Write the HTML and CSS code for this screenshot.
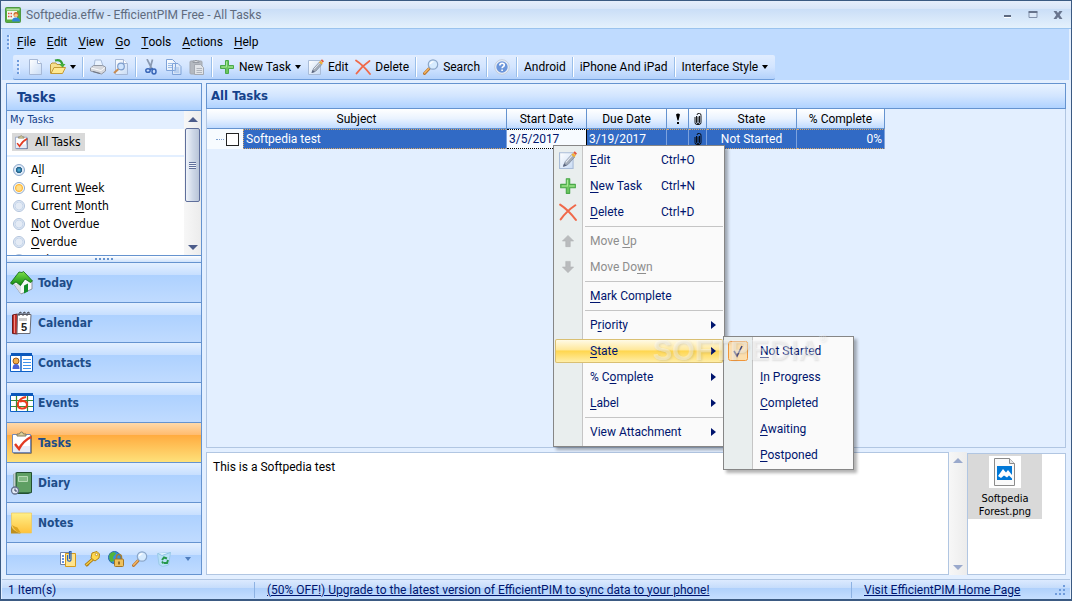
FILE: index.html
```html
<!DOCTYPE html>
<html lang="en">
<head>
  <meta charset="UTF-8">
  <meta name="viewport" content="width=device-width, initial-scale=1.0">
  <title>Softpedia.effw - EfficientPIM Free - All Tasks</title>
  <link rel="stylesheet" href="styles.css">
</head>
<body>
  <!-- Icons used more than once -->
  <svg class="defs" width="0" height="0" aria-hidden="true">
    <defs>
      <linearGradient id="page-fill" x1="0" y1="0" x2="1" y2="1">
        <stop offset="0" stop-color="#ffffff"/>
        <stop offset="1" stop-color="#c9dcf5"/>
      </linearGradient>
      <linearGradient id="roof-fill" x1="0" y1="0" x2="0" y2="1">
        <stop offset="0" stop-color="#7be04a"/>
        <stop offset="1" stop-color="#108a10"/>
      </linearGradient>
      <linearGradient id="note-fill" x1="0" y1="0" x2="0" y2="1">
        <stop offset="0" stop-color="#fff08a"/>
        <stop offset="1" stop-color="#ffc23c"/>
      </linearGradient>
    </defs>
    <symbol id="icon-edit" viewBox="0 0 16 16">
      <path d="M.5 1.500h12v14H.5z" fill="url(#page-fill)" stroke="#a9bcd8"/>
      <path d="M4 13.500l1.500-4L11.500 3l2.500 2.300L8 12z" fill="#a3acb9" stroke="#7d889b" stroke-width=".7"/>
      <path d="M6 10.200L12 3.600" stroke="#e3e8ef" stroke-width="1"/>
      <path d="M11 3.300l1.500-1.600 2.500 2.300-1.500 1.600z" fill="#f2b234"/>
      <path d="M12.700 1.600L14 .3l2 1.900-1.200 1.300z" fill="#e2583e"/>
      <path d="M3.500 14l1-3L7 13z" fill="#5b6680"/>
    </symbol>
    <symbol id="icon-plus" viewBox="0 0 16 16">
      <path d="M6.500 1.500h3v5h5v3h-5v5h-3v-5h-5v-3h5z" fill="#6cc65f" stroke="#4aa84a" stroke-linejoin="round"/>
      <path d="M7.500 2.500v5.500h-5M9 8h5" fill="none" stroke="#a7e996" stroke-width="1"/>
    </symbol>
    <symbol id="icon-delete" viewBox="0 0 16 16">
      <path d="M1 1.500Q8 6 15 15M14.500 2Q7 7 1.500 14.500" fill="none" stroke="#f0694a" stroke-width="1.800" stroke-linecap="round"/>
    </symbol>
    <symbol id="icon-search" viewBox="0 0 16 16">
      <path d="M1.500 14.500L6 9.800" stroke="#b9752f" stroke-width="3" stroke-linecap="round"/>
      <path d="M1.600 14L5.800 9.600" stroke="#f7b964" stroke-width="1.300" stroke-linecap="round"/>
      <circle cx="10" cy="5.500" r="4.700" fill="#d6ebff" stroke="#8ba6c9" stroke-width="1.200"/>
      <path d="M7.300 5Q8 2.700 10.500 2.600" fill="none" stroke="#fff" stroke-width="1.400"/>
    </symbol>
    <symbol id="icon-tasks" viewBox="0 0 24 24">
      <path d="M3.500 4.500h18v18h-18z" fill="#1e2c52"/>
      <path d="M2.500 3.500h18v18h-18z" fill="#fff" stroke="#7289b8"/>
      <path d="M3 15h17v6H3z" fill="#e6ecf7"/>
      <path d="M7 5V3h2.500q.5-2 2-2t2 2H16v2z" fill="#dcd19c" stroke="#85795a"/>
      <path d="M5 13l4 5q4-8 12-12" fill="none" stroke="#e23b22" stroke-width="2.500"/>
    </symbol>
    <symbol id="icon-clip" viewBox="0 0 8 12">
      <path d="M4 3.500v5.500M2.500 3v6a1.500 1.500 0 0 0 3 0V3M1 4v5.500a2 2 0 0 0 2 2h2a2 2 0 0 0 2-2V2.500a2 2 0 0 0-4-.5" fill="none" stroke="currentColor" stroke-width=".9"/>
    </symbol>
  </svg>

  <div class="window">
    <header class="titlebar">
      <svg class="icon" viewBox="0 0 16 16">
        <rect x=".5" y=".5" width="15" height="15" rx="1" fill="#58ad3d" stroke="#4e9a43"/>
        <path d="M2 4h10v8.500H2z" fill="#f4f7ef"/>
        <path d="M1.500 1.500h13v2h-13z" fill="#b9dfa5"/>
        <path d="M3 6.500h1.500M5.500 6.500H7M3 9.500h1.500M5.500 9.500H7" stroke="#dd5142" stroke-width="1.500"/>
        <circle cx="11" cy="7.500" r="2.500" fill="#c9692a"/>
        <circle cx="11" cy="8.300" r="1.700" fill="#ffc78c"/>
        <path d="M7 14.500q0-4 4-4t4 4z" fill="#3184d8"/>
      </svg>
      <h1>Softpedia.effw - EfficientPIM Free - All Tasks</h1>
      <div class="window-buttons">
        <button type="button" aria-label="Minimize"><svg viewBox="0 0 10 10"><path d="M1 6h7" stroke="#5c6980" stroke-width="2"/><path d="M1 7.500h7" stroke="#fff"/></svg></button>
        <button type="button" aria-label="Maximize"><svg viewBox="0 0 10 10"><path d="M1 2.500h8v5H1z" fill="#dbe8f8" stroke="#8291ab"/><path d="M.5 2h9" stroke="#66738c" stroke-width="2"/></svg></button>
        <button type="button" aria-label="Close"><svg viewBox="0 0 10 10"><path d="M.5 1h3L5 3l1.500-2h3L6.700 5l2.800 4h-3L5 7 3.500 9h-3l2.800-4z" fill="#68758e"/></svg></button>
      </div>
    </header>

    <nav class="menubar">
      <span class="grip"></span>
      <button type="button"><u>F</u>ile</button>
      <button type="button"><u>E</u>dit</button>
      <button type="button"><u>V</u>iew</button>
      <button type="button"><u>G</u>o</button>
      <button type="button"><u>T</u>ools</button>
      <button type="button"><u>A</u>ctions</button>
      <button type="button"><u>H</u>elp</button>
    </nav>

    <div class="toolbar-row">
      <div class="toolbar">
        <span class="grip"></span>
        <button type="button" aria-label="New"><svg class="icon" viewBox="0 0 16 16"><path d="M2.500.500h8l4 4v11h-12z" fill="url(#page-fill)" stroke="#a6b8d6"/><path d="M10.500.500v4h4" fill="#fff" stroke="#a6b8d6"/></svg></button>
        <button type="button" aria-label="Open"><svg class="icon" viewBox="0 0 16 16"><path d="M.5 14.500V5.500L2 4h4l1 1.500h6v3" fill="#f6df8e" stroke="#bd9638"/><path d="M1 14.500L4 8.500h11.500l-3 6z" fill="#ffe991" stroke="#c49a36"/><path d="M5 1.500q6-1.500 7.500 4" fill="none" stroke="#37a03a" stroke-width="2.200"/><path d="M9 5h6.500l-3 3.500z" fill="#45b03f"/></svg><span class="caret"></span></button>
        <span class="separator"></span>
        <button type="button" aria-label="Print"><svg class="icon" viewBox="0 0 16 16"><path d="M4 8L5 1h6l2 6z" fill="#e9f3ff" stroke="#a9bcd9"/><path d="M.5 9l3-2.500h9L15.500 8v4l-4 3L.5 12z" fill="#d6d8dd" stroke="#9298a4"/><path d="M1 9l10 2.500 4-3" fill="none" stroke="#fafbfc"/><path d="M3 12.500l7 2" stroke="#6f7684" stroke-width="1.300"/></svg></button>
        <button type="button" aria-label="Print Preview"><svg class="icon" viewBox="0 0 16 16"><path d="M2.500.500h8l4 4v11h-12z" fill="url(#page-fill)" stroke="#a6b8d6"/><path d="M10.500.500v4h4" fill="#fff" stroke="#a6b8d6"/><path d="M1 14l4.500-4" stroke="#c98b4f" stroke-width="2"/><circle cx="8" cy="7.500" r="3.300" fill="#cfe5ff" stroke="#7d9ccb" stroke-width="1.200"/></svg></button>
        <span class="separator"></span>
        <button type="button" aria-label="Cut"><svg class="icon" viewBox="0 0 16 16"><path d="M4 0l5 10M9.500.500L7 10" stroke="#8b9ab2" stroke-width="1.700"/><ellipse cx="5" cy="11.500" rx="2.200" ry="1.800" fill="none" stroke="#3a67b8" stroke-width="1.500"/><ellipse cx="11" cy="12.500" rx="2" ry="2.500" fill="none" stroke="#3a67b8" stroke-width="1.500"/><path d="M7 10.500l3-1" stroke="#3a67b8" stroke-width="1.500"/></svg></button>
        <button type="button" aria-label="Copy"><svg class="icon" viewBox="0 0 16 16"><path d="M.5.500h6l3 3v8h-9zM6.500 4.500h5.500l3 3v8H6.500z" fill="url(#page-fill)" stroke="#7fa3d8"/><path d="M2 4.500h4M2 6.500h4M2 8.500h4M8 9h5M8 11h5M8 13h5" stroke="#9dbde8"/></svg></button>
        <button type="button" aria-label="Paste"><svg class="icon" viewBox="0 0 16 16"><rect x="1" y="2" width="12" height="13" rx="1" fill="#b4b9c0" stroke="#a3a8b0"/><path d="M4 3.500V2h2q1-2 2 0h2v1.500z" fill="#d9dbde" stroke="#969ba3"/><path d="M5.500 5.500h6l3 3v7h-9z" fill="#e1e4e8" stroke="#a4a9b1"/><path d="M7.500 9.500H13M7.500 11.500H13M7.500 13.500H13" stroke="#afb4bc"/></svg></button>
        <span class="separator"></span>
        <button type="button"><svg class="icon"><use href="#icon-plus"/></svg>New Task<span class="caret"></span></button>
        <button type="button"><svg class="icon"><use href="#icon-edit"/></svg>Edit</button>
        <button type="button"><svg class="icon"><use href="#icon-delete"/></svg>Delete</button>
        <span class="separator"></span>
        <button type="button"><svg class="icon"><use href="#icon-search"/></svg>Search</button>
        <span class="separator"></span>
        <button type="button" aria-label="Help"><svg class="icon" viewBox="0 0 16 16"><circle cx="8" cy="8" r="7.300" fill="#e9eff8" stroke="#c3cddc"/><circle cx="8" cy="8" r="5.700" fill="#6b95da"/><path d="M5.800 6.500q0-2.300 2.300-2.300 2.200 0 2.200 1.900 0 1.200-1.200 1.700-1 .5-1 1.500M8.100 10.400v1.700" fill="none" stroke="#fff" stroke-width="1.600"/></svg></button>
        <span class="separator"></span>
        <button type="button">Android</button>
        <span class="separator"></span>
        <button type="button">iPhone And iPad</button>
        <span class="separator"></span>
        <button type="button">Interface Style<span class="caret"></span></button>
      </div>
    </div>

    <div class="workspace">
      <aside class="sidebar">
        <h2 class="panel-title">Tasks</h2>
        <div class="filters">
          <div class="filter-list">
            <h3>My Tasks</h3>
            <div class="all-tasks">
              <button type="button"><svg class="icon-small"><use href="#icon-tasks"/></svg>All Tasks</button>
            </div>
            <div class="radio-list">
              <label><input type="radio" name="filter" checked><span>A<u>l</u>l</span></label>
              <label><input type="radio" name="filter" class="hot"><span>Current <u>W</u>eek</span></label>
              <label><input type="radio" name="filter"><span>Current <u>M</u>onth</span></label>
              <label><input type="radio" name="filter"><span><u>N</u>ot Overdue</span></label>
              <label><input type="radio" name="filter"><span><u>O</u>verdue</span></label>
              <label><input type="radio" name="filter"><span>Today</span></label>
            </div>
          </div>
          <div class="scrollbar">
            <span class="arrow-up"></span>
            <span class="thumb"></span>
            <span class="arrow-down"></span>
          </div>
        </div>
        <div class="splitter"><span></span><span></span><span></span><span></span><span></span></div>

        <nav class="modules">
          <button type="button"><svg viewBox="0 0 24 24"><path d="M3 12l8 11 11-5v-8L13 5z" fill="#f7f8fa" stroke="#8c929c"/><path d="M3 12l8 11V14z" fill="#dcdfe5"/><path d="M14 14.500l4-2v8l-4 2z" fill="#148c2a"/><path d="M.5 12L9 1l3 .5 1.500-1L15 2l7.500 8-2 1.500L15 8l-4.500 6.500L6 11l-4 2.500z" fill="url(#roof-fill)" stroke="#0b6413" stroke-width=".8"/></svg>Today</button>
          <button type="button"><svg viewBox="0 0 24 24"><path d="M2.500 4l5-1v20l-5-.5z" fill="#c02d27" stroke="#6d1b1b"/><path d="M4.500 4v18" stroke="#ee8a80"/><path d="M7.500 3.500H21l-1 19H7z" fill="#fff" stroke="#6c6c75"/><path d="M9 5V2l2-1v3M13 5V2l2-1v3M17 5V2l2-1v3" fill="none" stroke="#41434d"/><path d="M10 7v3M12 7v3M14 7v3M16 7v3" stroke="#999"/><text x="11" y="20" class="day">5</text></svg>Calendar</button>
          <button type="button"><svg viewBox="0 0 24 24"><path d="M.5 4.500h22v16H.5z" fill="#fff" stroke="#0d60c8"/><path d="M1 3.500h21" stroke="#0c58bb" stroke-width="3"/><path d="M11 4v16" stroke="#0d60c8" stroke-width="1.500"/><path d="M13 8.500h8M13 11.500h8M13 14.500h8M13 17.500h8" stroke="#4295ed"/><circle cx="6" cy="10" r="3" fill="#f3ae4c" stroke="#9c5a18"/><path d="M2.500 18q0-5 3.500-5t3.500 5z" fill="#4a62d6"/></svg>Contacts</button>
          <button type="button"><svg viewBox="0 0 24 24"><path d="M.5 4.500h23v16H.5z" fill="#fff" stroke="#0d60c8"/><path d="M1 3.500h22" stroke="#0c58bb" stroke-width="3"/><path d="M1 9.500h22M1 15.500h22M6.500 5v15M17.500 5v15" stroke="#3d8b33" stroke-width="1.200"/><path d="M16 6Q10 7 8 12q-1 5 3.500 5.500Q17 18 17 13q-1-4-7-2.500" fill="none" stroke="#ee3a1c" stroke-width="2"/></svg>Events</button>
          <button type="button" class="active"><svg><use href="#icon-tasks"/></svg>Tasks</button>
          <button type="button"><svg viewBox="0 0 24 24"><path d="M4 3l3-1.500h14.500v20L18 22.500H4z" fill="#356f43" stroke="#234f31"/><path d="M7 2h14v19H7z" fill="#5f9f63"/><path d="M4.500 2v20" stroke="#c4ccd0" stroke-width="2"/><path d="M8.500 5.500h9v5h-9z" fill="#83b985" stroke="#b6dab4"/><circle cx="5" cy="19.500" r="3.500" fill="#e5ebf7" stroke="#65728e" stroke-width="1.300"/><path d="M5 17.500v2.500h2" fill="none" stroke="#34415e"/></svg>Diary</button>
          <button type="button"><svg viewBox="0 0 24 24"><path d="M1.500 2h20v20H10Q2 21 1.500 13z" fill="url(#note-fill)" stroke="#eec759" stroke-width=".7"/><path d="M1 14q1 6 10 8.500H1z" fill="#bd8f1e"/><path d="M2 14q5 3 5 2l4 6Q5 21 2 14z" fill="#dda51f"/></svg>Notes</button>
        </nav>
        <div class="shortcuts">
          <button type="button" aria-label="Clipboard"><svg class="icon" viewBox="0 0 16 16"><path d="M.5 1.500h9v12h-9z" fill="#fff" stroke="#6e82a8"/><path d="M2 5h2M2 8h2M2 11h2" stroke="#3770d3" stroke-width="1.500"/><path d="M5.500 2.500h10v13h-10z" fill="#ffe48c" stroke="#d49a1c"/><path d="M7.500 4v4.500a1.500 1.500 0 0 0 3.500 0V.5H9.500V8" fill="none" stroke="#2b63b9" stroke-width="1.200"/></svg></button>
          <button type="button" aria-label="Passwords"><svg class="icon" viewBox="0 0 16 16"><path d="M9 8L1.500 14.500M3 13l1.500 1.500" stroke="#aa7b12" stroke-width="3"/><path d="M9 8L2 14" stroke="#f5cb45" stroke-width="1.500"/><path d="M8 2l5-1.500L15.500 3 15 7l-4 3-4-3z" fill="#ffd84f" stroke="#b18518"/><circle cx="12.500" cy="3.500" r="1.200" fill="#fff" stroke="#a6790f" stroke-width=".7"/></svg></button>
          <button type="button" aria-label="Lock"><svg class="icon" viewBox="0 0 16 16"><circle cx="6.500" cy="6.500" r="6" fill="#368fdc" stroke="#2368a6"/><path d="M2 2.500q4-3 6 0L5 6l1 4-3 1Q0 7 2 2.500z" fill="#51b43a"/><path d="M8.500 9V6.500q0-3 2.500-3t2.500 3V9" fill="none" stroke="#a17e37" stroke-width="1.500"/><rect x="6.500" y="8" width="9" height="7.500" rx="1" fill="#efc15c" stroke="#a47625"/><path d="M11 10.500v3" stroke="#795515" stroke-width="1.500"/></svg></button>
          <button type="button" aria-label="Find"><svg class="icon"><use href="#icon-search"/></svg></button>
          <button type="button" aria-label="Recycle Bin"><svg class="icon" viewBox="0 0 16 16"><path d="M1.500 2.500l13-1-2 12.500-6 1.500-3.500-2z" fill="#b8e0f8" stroke="#9ccbe9"/><path d="M2 2.500l4 2 8.500-3" fill="#e3f4ff" stroke="#8fc3e5"/><path d="M6 9l2-2.500 3 1M12 9l-1 3H8M6 10.500l1.500 2" fill="none" stroke="#25974a" stroke-width="2"/></svg></button>
          <button type="button" aria-label="Configure"><span class="caret"></span></button>
        </div>
      </aside>

      <main class="content">
        <section class="task-pane">
          <h2 class="pane-title">All Tasks</h2>
          <div class="grid-area">
            <table class="task-grid">
              <colgroup>
                <col class="col-subject"><col class="col-date"><col class="col-date"><col class="col-priority"><col class="col-clip"><col class="col-state"><col class="col-complete">
              </colgroup>
              <thead>
                <tr>
                  <th>Subject</th>
                  <th>Start Date</th>
                  <th>Due Date</th>
                  <th aria-label="Priority"><svg class="mark" viewBox="0 0 8 12"><path d="M2 1.500Q4-.5 6 1.500L4.500 7.500h-1z" fill="#000"/><path d="M3 9h2v2H3z" fill="#000"/></svg></th>
                  <th aria-label="Attachment"><svg class="clip"><use href="#icon-clip"/></svg></th>
                  <th>State</th>
                  <th>% Complete</th>
                </tr>
              </thead>
              <tbody>
                <tr>
                  <td class="subject-cell">
                    <div class="subject">
                      <span class="tree-line"></span>
                      <input type="checkbox" id="task-done" aria-label="Completed">
                      <label for="task-done">Softpedia test</label>
                    </div>
                  </td>
                  <td class="focused">3/5/2017</td>
                  <td>3/19/2017</td>
                  <td></td>
                  <td class="center"><svg class="clip"><use href="#icon-clip"/></svg></td>
                  <td class="center">Not Started</td>
                  <td class="right">0%</td>
                </tr>
              </tbody>
            </table>
          </div>
        </section>

        <section class="detail-pane">
          <textarea class="notes" aria-label="Notes">This is a Softpedia test</textarea>
          <div class="scrollbar disabled">
            <span class="arrow-up"></span>
            <span class="arrow-down"></span>
          </div>
          <div class="attachments">
            <button type="button" class="attachment">
              <svg viewBox="0 0 32 32"><path d="M0 0h32v32H0z" fill="#fff"/><path d="M5.500 2.500h15l5 5v22h-20z" fill="#fafafa" stroke="#8b8b8b"/><path d="M20.500 2.500v5h5" fill="#e6e6e6" stroke="#8b8b8b"/><path d="M8 10h15v14H8z" fill="#0078d7"/><path d="M9 20l5-7 3 3.500 2-2.500 4 5v3.500l-3-3-2 2-3-2-3 2.500-3-2z" fill="#fff"/></svg>
              Softpedia Forest.png
            </button>
          </div>
        </section>
      </main>
    </div>

    <footer class="statusbar">
      <span class="item-count">1 Item(s)</span>
      <a href="#upgrade" class="upgrade">(50% OFF!) Upgrade to the latest version of EfficientPIM to sync data to your phone!</a>
      <a href="#home" class="home">Visit EfficientPIM Home Page</a>
      <svg class="resize" viewBox="0 0 12 12"><path d="M9 1h2v2H9zM5 5h2v2H5zM9 5h2v2H9zM1 9h2v2H1zM5 9h2v2H5zM9 9h2v2H9z" fill="#6f9bdb"/></svg>
    </footer>

    <ul class="popup context-menu">
      <li><button type="button"><svg><use href="#icon-edit"/></svg><span><u>E</u>dit</span><kbd>Ctrl+O</kbd></button></li>
      <li><button type="button"><svg><use href="#icon-plus"/></svg><span><u>N</u>ew Task</span><kbd>Ctrl+N</kbd></button></li>
      <li><button type="button"><svg><use href="#icon-delete"/></svg><span><u>D</u>elete</span><kbd>Ctrl+D</kbd></button></li>
      <li class="divider"></li>
      <li><button type="button" disabled><svg viewBox="0 0 16 16"><path d="M8 3l5 5h-3v5H6V8H3z" fill="#b9bbbd" stroke="#aeb0b2" stroke-width=".5"/></svg><span>Move <u>U</u>p</span></button></li>
      <li><button type="button" disabled><svg viewBox="0 0 16 16"><path d="M8 13l5-5h-3V3H6v5H3z" fill="#b9bbbd" stroke="#aeb0b2" stroke-width=".5"/></svg><span>Move Do<u>w</u>n</span></button></li>
      <li class="divider"></li>
      <li><button type="button"><i></i><span><u>M</u>ark Complete</span></button></li>
      <li class="divider"></li>
      <li><button type="button"><i></i><span>P<u>r</u>iority</span><b class="more"></b></button></li>
      <li class="open">
        <button type="button"><i></i><span><u>S</u>tate</span><b class="more"></b></button>
        <ul class="popup submenu">
          <li><button type="button" class="checked"><svg viewBox="0 0 20 20"><rect x=".5" y=".5" width="19" height="19" rx="2" fill="#fcdfae" stroke="#f0963a"/><path d="M6 10l3 5 5-10" fill="none" stroke="#45497c" stroke-width="1.600"/></svg><span><u>N</u>ot Started</span></button></li>
          <li><button type="button"><i></i><span><u>I</u>n Progress</span></button></li>
          <li><button type="button"><i></i><span><u>C</u>ompleted</span></button></li>
          <li><button type="button"><i></i><span><u>A</u>waiting</span></button></li>
          <li><button type="button"><i></i><span><u>P</u>ostponed</span></button></li>
        </ul>
      </li>
      <li><button type="button"><i></i><span>% C<u>o</u>mplete</span><b class="more"></b></button></li>
      <li><button type="button"><i></i><span><u>L</u>abel</span><b class="more"></b></button></li>
      <li class="divider"></li>
      <li><button type="button"><i></i><span>View Attachment</span><b class="more"></b></button></li>
    </ul>
    <div class="watermark">SOFTPEDIA<sup>®</sup></div>
  </div>
</body>
</html>
```

FILE: styles.css
```css
:root {
  --ui-font: Roboto, "Open Sans", sans-serif;
  --side-font: "DejaVu Sans Condensed", "DejaVu Sans", sans-serif;
  --line: #6593cf;
  --soft-line: #b1c6e2;
  --workspace: #e3efff;
  --menu-bg: #bfdbff;
  --title-color: #15428b;
  --menu-text: #00156e;
}

* {
  box-sizing: border-box;
}

body {
  margin: 0;
  font-family: var(--ui-font);
  font-size: 12px;
  line-height: 16px;
  color: #000;
}

button {
  font: inherit;
  color: inherit;
  background: none;
  border: none;
  padding: 0;
  display: flex;
  align-items: center;
  white-space: nowrap;
}

h1, h2, h3, ul {
  margin: 0;
  padding: 0;
  font-size: 12px;
  font-weight: normal;
}

u {
  text-underline-offset: 2px;
}

.defs {
  position: absolute;
}

.icon {
  width: 16px;
  height: 16px;
  flex: none;
}

.icon-small {
  width: 15px;
  height: 15px;
}

.window {
  position: relative;
  min-height: 100vh;
  display: flex;
  flex-direction: column;
  background: var(--workspace);
  border: 1px solid #3b5a82;
  border-bottom-width: 2px;
}

/* Title bar */
.titlebar {
  height: 28px;
  display: flex;
  align-items: center;
  gap: 5px;
  padding: 0 8px 0 4px;
  background: linear-gradient(#e6eefb 0, #d8e5f8 8px, #cadef7 8px, #e4f1fc 100%);
  border-bottom: 1px solid #9ac3ee;
}

.titlebar h1 {
  flex: 1;
  color: #5f6b7e;
}

.window-buttons {
  display: flex;
  gap: 15px;
}

.window-buttons svg {
  width: 10px;
  height: 10px;
}

/* Menu and toolbar */
.menubar {
  height: 26px;
  display: flex;
  align-items: center;
  gap: 11px;
  padding-left: 5px;
  margin: 0 2px 0 1px;
  background: var(--menu-bg);
}

.menubar .grip {
  margin-right: -4px;
}

.grip {
  width: 3px;
  height: 14px;
  background: repeating-linear-gradient(#6f9bdb 0, #6f9bdb 2px, transparent 2px, transparent 4px);
  border-right: 1px solid #e6f0ff;
}

.toolbar-row {
  display: flex;
  margin: 0 2px 0 1px;
  padding-left: 11px;
  background: var(--menu-bg);
}

.toolbar {
  height: 25px;
  display: flex;
  align-items: center;
  gap: 7px;
  padding: 0 7px 0 4px;
  background: linear-gradient(#e1edff, #d3e5ff 50%, #b3d1fb);
  border-bottom: 1px solid #6f9ddb;
  border-radius: 2px;
}

.toolbar button {
  gap: 4px;
}

.separator {
  width: 2px;
  height: 20px;
  margin: 0 -1px;
  background: #9abfea;
  border-right: 1px solid #fff;
}

.caret {
  border: 3px solid transparent;
  border-top: 4px solid #000;
  border-bottom: none;
}

/* Workspace */
.workspace {
  flex: 1;
  display: flex;
  gap: 4px;
  padding: 3px 5px 4px;
}

.sidebar {
  width: 196px;
  flex: none;
  display: flex;
  flex-direction: column;
  border: 1px solid var(--line);
}

.panel-title, .pane-title {
  background: linear-gradient(#e9f3ff, #d2e5ff 50%, #afd2ff);
  color: var(--title-color);
  font-family: var(--side-font);
  font-weight: bold;
  border-bottom: 1px solid var(--line);
}

.panel-title {
  font-size: 14px;
  line-height: 26px;
  padding-left: 10px;
}

.filters {
  flex: 1 1 0;
  min-height: 0;
  display: flex;
  overflow: hidden;
  background: #fff;
  font-family: var(--side-font);
}

.filter-list {
  flex: 1;
  height: 0;
}

.filter-list h3 {
  line-height: 18px;
  font-size: 11px;
  padding-left: 3px;
  color: var(--title-color);
  background: var(--workspace);
}

.all-tasks {
  padding: 4px 5px;
  border-bottom: 2px solid var(--workspace);
}

.all-tasks button {
  height: 18px;
  gap: 6px;
  padding: 0 4px 0 2px;
  background: #d9d9d9;
}

.radio-list {
  padding-top: 4px;
}

.radio-list label {
  height: 18px;
  display: flex;
  align-items: center;
  gap: 6px;
  padding-left: 6px;
}

.radio-list input {
  appearance: none;
  width: 12px;
  height: 12px;
  margin: 0;
  border: 1px solid #b1c3dc;
  border-radius: 50%;
  background: radial-gradient(#e4ebf5 45%, #c3d3e8 55%, #eef4fc 70%);
}

.radio-list input:checked {
  border-color: #8da9cc;
  background: radial-gradient(#4aa6cf 10%, #1f5a82 40%, #dfeaf7 50%);
}

.radio-list .hot {
  border-color: #8da9cc;
  background: radial-gradient(#ffdf8c 30%, #fdb93d 50%, #fff 65%);
}

.scrollbar {
  width: 17px;
  flex: none;
  display: flex;
  flex-direction: column;
  align-items: center;
  padding: 6px 0 5px;
  background: linear-gradient(90deg, #f7f7f7, #ececec);
}

.arrow-up, .arrow-down {
  border: 5px solid transparent;
}

.arrow-up {
  border-top: none;
  border-bottom-color: #4c5c8a;
}

.arrow-down {
  margin-top: auto;
  border-bottom: none;
  border-top-color: #4c5c8a;
}

.disabled .arrow-up {
  border-bottom-color: #9aa9cc;
}

.disabled .arrow-down {
  border-top-color: #9aa9cc;
}

.thumb {
  width: 15px;
  height: 74px;
  margin-top: 6px;
  border: 1px solid #5f6f9b;
  border-radius: 2px;
  background:
    repeating-linear-gradient(#5f6f9b 0, #5f6f9b 1px, #eef2f8 1px, #eef2f8 2px) center / 7px 7px no-repeat,
    linear-gradient(90deg, #f0f4fa, #cfd9e8 50%, #b9c5d8);
}

.splitter {
  height: 8px;
  display: flex;
  justify-content: center;
  align-items: center;
  gap: 2px;
  border: solid var(--line);
  border-width: 1px 0;
  background: linear-gradient(#fff, #cfe2fc);
}

.splitter span {
  width: 2px;
  height: 2px;
  background: #6593cf;
}

.modules button {
  width: 100%;
  height: 40px;
  gap: 4px;
  padding-left: 3px;
  font-family: var(--side-font);
  font-weight: bold;
  color: #204d89;
  background: linear-gradient(#e3efff, #c7dfff 12px, #add1ff 12px, #c0dbff);
  border-bottom: 1px solid var(--line);
}

.modules .active {
  background: linear-gradient(#ffd9aa, #ffbb6e 12px, #ffab3f 12px, #fee17a);
}

.modules svg {
  width: 24px;
  height: 24px;
}

.day {
  font: bold 11px "Liberation Sans", sans-serif;
  fill: #222;
}

.shortcuts {
  height: 31px;
  display: flex;
  align-items: center;
  justify-content: flex-end;
  gap: 8px;
  padding-right: 10px;
  background: linear-gradient(#e3efff, #c7dfff 12px, #add1ff 12px, #c0dbff);
}

.shortcuts .caret {
  margin-left: 5px;
  border-top-color: #4f7dbd;
}

.content {
  flex: 1;
  min-width: 0;
  display: flex;
  flex-direction: column;
  gap: 4px;
}

.task-pane {
  flex: 1;
  display: flex;
  flex-direction: column;
  border: 1px solid var(--soft-line);
}

.pane-title {
  font-size: 13px;
  line-height: 24px;
  padding-left: 4px;
  margin: -1px -1px 0;
  border: 1px solid var(--line);
}

.grid-area {
  flex: 1;
  overflow: hidden;
}

/* Task grid */
.task-grid {
  table-layout: fixed;
  width: 678px;
  border-collapse: separate;
  border-spacing: 0;
}

.col-subject {
  width: 300px;
}

.col-date {
  width: 80px;
}

.col-priority {
  width: 22px;
}

.col-clip {
  width: 18px;
}

.col-state {
  width: 90px;
}

.col-complete {
  width: 88px;
}

.task-grid th {
  height: 20px;
  padding: 0;
  font-weight: normal;
  background: linear-gradient(#fff, #eaf3ff 50%, #c0dbff);
  border-right: 1px solid var(--line);
  border-bottom: 1px solid var(--line);
}

.task-grid td {
  height: 20px;
  padding: 0 2px;
  color: #fff;
  background: #316ac5;
  border: 1px dotted #d9a765;
  border-width: 1px 0;
  border-right: 1px solid #7da2de;
}

.task-grid .subject-cell {
  padding: 0;
  border-width: 0 1px 0 0;
}

.task-grid .focused {
  color: var(--menu-text);
  background: #f7fbff;
  border-color: #000;
}

.task-grid .center {
  text-align: center;
}

.task-grid .right {
  text-align: right;
}

.subject {
  display: flex;
  align-items: center;
  height: 20px;
  padding-left: 9px;
  background: #f7fbff;
}

.tree-line {
  width: 8px;
  margin-right: 2px;
  border-top: 1px dotted #7c9fd0;
}

.subject input {
  appearance: none;
  width: 13px;
  height: 13px;
  margin: 0 4px 0 0;
  background: #fff;
  border: 1px solid #222;
}

.subject label {
  flex: 1;
  height: 20px;
  line-height: 18px;
  padding-left: 2px;
  background: #316ac5;
  border: 1px dotted #d9a765;
  border-right: none;
}

.mark, .clip {
  display: block;
  width: 8px;
  height: 12px;
  margin: auto;
  color: #000;
}

/* Notes and attachments */
.detail-pane {
  height: 123px;
  display: flex;
}

.notes {
  flex: 1;
  padding: 6px;
  font: inherit;
  color: #000;
  background: #fff;
  border: 1px solid var(--soft-line);
  border-radius: 0;
  resize: none;
  outline: none;
}

.detail-pane .scrollbar {
  width: 18px;
}

.attachments {
  width: 99px;
  background: #fff;
  border: 1px solid var(--soft-line);
  margin-top: 1px;
}

.attachment {
  width: 74px;
  flex-direction: column;
  gap: 4px;
  padding: 2px 8px 1px;
  font-family: var(--side-font);
  font-size: 11px;
  line-height: 13px;
  white-space: normal;
  background: #d9d9d9;
}

.attachment svg {
  width: 32px;
  height: 32px;
}

/* Status bar */
.statusbar {
  height: 20px;
  display: flex;
  align-items: center;
  padding: 0 4px 0 6px;
  margin: 0 1px;
  border-top: 1px solid var(--soft-line);
  color: var(--menu-text);
  background: linear-gradient(#dceaff, #c5dcfb 8px, #afd0fb 8px, #c5deff);
}

.statusbar a {
  color: var(--menu-text);
  border-left: 1px solid #8db2e3;
  padding-left: 12px;
  white-space: nowrap;
}

.item-count {
  width: 246px;
}

.upgrade {
  flex: 1;
}

.home {
  width: 203px;
}

.resize {
  width: 12px;
  height: 12px;
}

/* Popup menus */
.popup {
  position: absolute;
  list-style: none;
  padding: 1px;
  color: var(--menu-text);
  background: linear-gradient(90deg, #e9eeee 28px, #c5c5c5 28px, #c5c5c5 29px, #fafafa 29px);
  border: 1px solid #868686;
  box-shadow: 3px 3px 3px rgba(0, 0, 0, 0.3);
}

.context-menu {
  left: 552px;
  top: 144px;
  width: 172px;
}

.submenu {
  left: 168px;
  top: -3px;
  width: 131px;
}

.popup li {
  position: relative;
}

.popup button {
  width: 100%;
  height: 26px;
  padding: 0 7px 0 4px;
}

.popup button:disabled {
  color: #8d8d8d;
}

.popup svg, .popup i {
  width: 18px;
  height: 18px;
  margin-right: 13px;
  flex: none;
}

.popup span {
  flex: 1;
  text-align: left;
}

.popup kbd {
  font: inherit;
  width: 55px;
  text-align: left;
}

.popup .checked svg {
  width: 20px;
  height: 20px;
  margin: 0 12px 0 -1px;
}

.popup .divider {
  height: 3px;
  margin-left: 30px;
  padding-top: 1px;
  background: #c5c5c5 content-box;
  border-bottom: 1px solid transparent;
}

.more {
  border: 4px solid transparent;
  border-left: 5px solid var(--menu-text);
  border-right: none;
}

.open > button {
  height: 24px;
  margin: 1px 0;
  border-radius: 2px;
  background: linear-gradient(#fffcee, #ffe89a 45%, #ffd64f 50%, #fff0b0);
  box-shadow: inset 0 0 0 1px #d9bf72;
}

.watermark {
  position: absolute;
  left: 652px;
  top: 333px;
  font: bold 29px/32px "Liberation Sans", sans-serif;
  color: rgba(255, 255, 255, 0.4);
  text-shadow: 1px 1px 2px rgba(120, 120, 120, 0.2);
  pointer-events: none;
}

.watermark sup {
  font-size: 10px;
  line-height: 10px;
  vertical-align: top;
}
```
